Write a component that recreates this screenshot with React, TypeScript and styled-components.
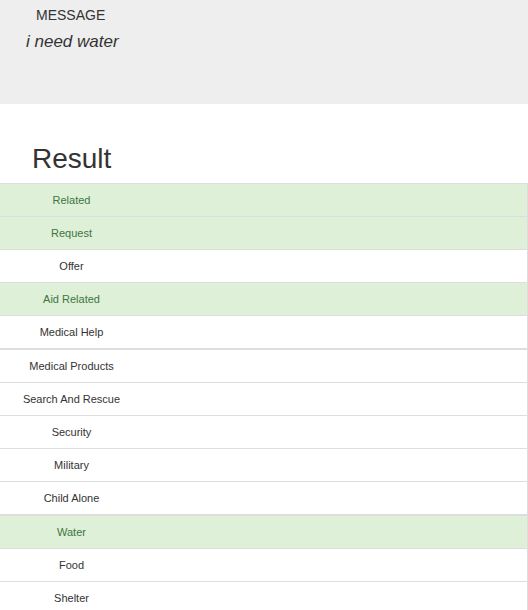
import React from "react";
import styled, { createGlobalStyle } from "styled-components";

const Global = createGlobalStyle`
  html, body { margin: 0; padding: 0; background: #fff; }
  body { font-family: "Liberation Sans", Arial, sans-serif; color: #333; }
`;

const Jumbo = styled.header`
  background: #eeeeee;
  height: 104px;
  box-sizing: border-box;
  padding: 5px 0 0 0;
  display: flex;
  flex-direction: column;
`;

const Label = styled.div`
  font-size: 14px;
  line-height: 20px;
  margin-left: 36px;
  color: #333;
`;

const Message = styled.div`
  font-size: 17px;
  line-height: 24px;
  font-style: italic;
  margin: 5px 0 0 26px;
  color: #333;
`;

const Title = styled.h1`
  font-size: 28px;
  font-weight: 400;
  line-height: 31px;
  margin: 39px 0 9px 32px;
  color: #333;
`;

const Group = styled.ul`
  list-style: none;
  margin: 0;
  padding: 0;
`;

const Item = styled.li<{ $on: boolean }>`
  display: flex;
  box-sizing: border-box;
  height: 34px;
  margin-bottom: -1px;
  border: 1px solid #ddd;
  border-left: none;
  background: ${(p) => (p.$on ? "#dff0d8" : "#fff")};
  color: ${(p) => (p.$on ? "#3c763d" : "#333")};
  &:last-child { margin-bottom: 0; }
`;

const Cell = styled.span`
  width: 143px;
  text-align: center;
  font-size: 11px;
  line-height: 32px;
`;

const groups: [string, boolean][][] = [
  [
    ["Related", true],
    ["Request", true],
    ["Offer", false],
    ["Aid Related", true],
    ["Medical Help", false],
  ],
  [
    ["Medical Products", false],
    ["Search And Rescue", false],
    ["Security", false],
    ["Military", false],
    ["Child Alone", false],
  ],
  [
    ["Water", true],
    ["Food", false],
    ["Shelter", false],
  ],
];

export default function App() {
  return (
    <>
      <Global />
      <Jumbo>
        <Label>MESSAGE</Label>
        <Message>i need water</Message>
      </Jumbo>
      <Title>Result</Title>
      {groups.map((g, i) => (
        <Group key={i}>
          {g.map(([name, on]) => (
            <Item key={name} $on={on}>
              <Cell>{name}</Cell>
            </Item>
          ))}
        </Group>
      ))}
    </>
  );
}
